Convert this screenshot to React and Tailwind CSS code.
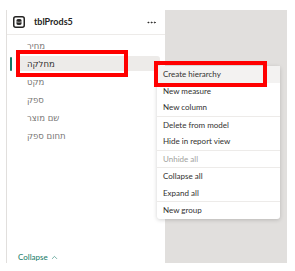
import { ChevronUp, MoreHorizontal } from "lucide-react";

const fields = ["מחיר", "מחלקה", "מקט", "ספק", "שם מוצר", "תחום ספק"];

const menu = [
  [{ label: "Create hierarchy", hover: true }, { label: "New measure" }, { label: "New column" }],
  [{ label: "Delete from model" }, { label: "Hide in report view" }],
  [{ label: "Unhide all", disabled: true }],
  [{ label: "Collapse all" }, { label: "Expand all" }],
  [{ label: "New group" }],
];

function TableIcon() {
  return (
    <svg width="12" height="12" viewBox="0 0 12 12" className="shrink-0">
      <rect x="0.75" y="0.75" width="10.5" height="10.5" rx="2" fill="none" stroke="#252423" strokeWidth="1.5" />
      <path d="M3.5 4 Q3.5 3 6 3 Q8.5 3 8.5 4 V8 Q8.5 9 6 9 Q3.5 9 3.5 8 Z" fill="#252423" />
      <path d="M3.5 5.8 Q6 6.8 8.5 5.8" stroke="#fff" strokeWidth="0.6" fill="none" />
    </svg>
  );
}

export default function App() {
  return (
    <div className="relative flex w-[295px] h-[271px] bg-white font-['Lato','Noto_Sans',sans-serif] overflow-hidden">
      {/* Fields pane */}
      <div className="ml-[6px] mt-[10px] w-[159px] h-[253px] border-l border-[#e1dfdd] flex flex-col">
        <div className="h-[25px] flex items-center border-b border-[#edebe9] pl-[6px] pr-[8px]">
          <TableIcon />
          <span className="ml-[9px] text-[9px] font-bold text-[#252423]">tblProds5</span>
          <MoreHorizontal className="ml-auto w-[11px] h-[11px] text-[#252423]" strokeWidth={2} />
        </div>
        <div className="pt-[2px] flex flex-col">
          {fields.map((f, i) => (
            <div key={f} className="relative h-[18px] flex items-center">
              {i === 1 && (
                <>
                  <div className="absolute left-[3px] top-[2px] w-[2px] h-[14px] rounded-full bg-[#117865]" />
                  <div className="absolute left-[13px] right-[5px] top-[1px] h-[15px] rounded-r-[3px] bg-[#edebe9]" />
                </>
              )}
              <span
                dir="rtl"
                className={`relative pl-[20px] text-[8.5px] font-['DejaVu_Sans',sans-serif] ${
                  i === 1 ? "text-[#323130]" : "text-[#797775]"
                }`}
              >
                {f}
              </span>
            </div>
          ))}
        </div>
        <button className="mt-auto mb-0 ml-[11px] flex items-center gap-[2px] text-[8px] text-[#117865]">
          Collapse
          <ChevronUp className="w-[9px] h-[9px]" strokeWidth={1.5} />
        </button>
      </div>

      {/* Canvas */}
      <div className="mt-[10px] w-[122px] h-[253px] bg-[#e1dfdd]" />

      {/* Context menu */}
      <div className="absolute left-[157px] top-[66px] w-[123px] bg-white rounded-[3px] shadow-[0_1px_4px_rgba(0,0,0,0.18)]">
        {menu.map((group, gi) => (
          <div key={gi} className={gi > 0 ? "border-t border-[#edebe9]" : ""}>
            {group.map((item) => (
              <div
                key={item.label}
                className={`h-[16.5px] flex items-center pl-[6px] text-[8px] ${
                  item.hover ? "bg-[#f3f2f1]" : ""
                } ${item.disabled ? "text-[#a19f9d]" : "text-[#323130]"}`}
              >
                {item.label}
              </div>
            ))}
          </div>
        ))}
      </div>

      {/* Highlight boxes */}
      <div className="absolute left-[16px] top-[50px] w-[112px] h-[27px] border-4 border-[#ff0000]" />
      <div className="absolute left-[154px] top-[61px] w-[113px] h-[26px] border-4 border-[#ff0000]" />
    </div>
  );
}
